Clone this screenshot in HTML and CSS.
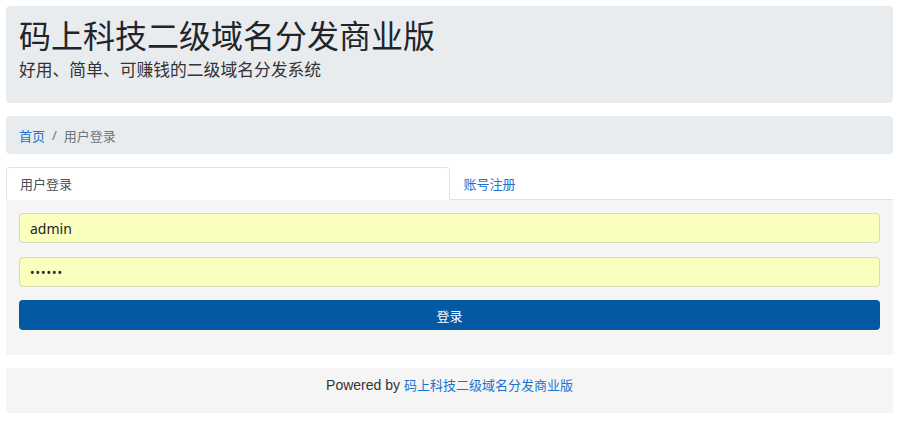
FILE: index.html
```html
<!DOCTYPE html>
<html lang="zh-CN">
<head>
  <meta charset="UTF-8">
  <meta name="viewport" content="width=device-width, initial-scale=1.0">
  <title>用户登录 - 码上科技二级域名分发商业版</title>
  <link rel="stylesheet" href="styles.css">
</head>
<body>
  <div class="container">
    <div class="jumbotron">
      <h1>码上科技二级域名分发商业版</h1>
      <p class="lead">好用、简单、可赚钱的二级域名分发系统</p>
    </div>

    <ol class="breadcrumb">
      <li><a href="#">首页</a></li>
      <li class="sep">/</li>
      <li class="active">用户登录</li>
    </ol>

    <ul class="nav-tabs">
      <li class="tab active">用户登录</li>
      <li class="tab"><a href="#">账号注册</a></li>
    </ul>

    <div class="tab-content">
      <form class="login-form">
        <input class="form-control" type="text" value="admin">
        <input class="form-control" type="password" value="123456">
        <button type="button" class="btn-login">登录</button>
      </form>
    </div>

    <div class="footer">
      Powered by <a href="#">码上科技二级域名分发商业版</a>
    </div>
  </div>
</body>
</html>
```

FILE: styles.css
```css
body {
  font-family: "Noto Sans", "Noto Sans CJK SC", sans-serif;
  background-color: #fff;
  color: #212529;
  margin: 0;
  padding: 0;
}

a {
  color: #1a73d0;
  text-decoration: none;
}

.container {
  margin: 6px 7px 6px 6px;
}

.jumbotron {
  background-color: #e9ecef;
  border-radius: 4px;
  height: 97px;
  padding: 12px 13px 0;
  box-sizing: border-box;
}

.jumbotron h1 {
  font-size: 32px;
  font-weight: 400;
  line-height: 36px;
  margin: 0;
  color: #212529;
}

.lead {
  font-size: 16.8px;
  line-height: 24px;
  margin: 4px 0 0;
  color: #333;
}

.breadcrumb {
  list-style: none;
  display: flex;
  align-items: center;
  gap: 7px;
  margin: 13px 0 0;
  padding: 0 13px;
  height: 38px;
  background-color: #e9ecef;
  border-radius: 4px;
  font-size: 13px;
  color: #6c757d;
}

.nav-tabs {
  list-style: none;
  display: flex;
  margin: 13px 0 0;
  padding: 0;
  border-bottom: 1px solid #dee2e6;
  font-size: 13px;
}

.tab {
  flex: 0 0 50%;
  height: 32px;
  display: flex;
  align-items: center;
  padding: 0 13px;
  box-sizing: border-box;
  border: 1px solid transparent;
  border-radius: 4px 4px 0 0;
  margin-bottom: -1px;
  color: #495057;
}

.tab.active {
  background-color: #fff;
  border-color: #dee2e6 #dee2e6 #fff;
  height: 33px;
}

.tab-content {
  background-color: #f5f5f5;
  padding: 13px 13px 25px;
}

.login-form {
  display: flex;
  flex-direction: column;
  gap: 14px;
}

.form-control {
  height: 30px;
  box-sizing: border-box;
  padding: 0 10px;
  font-family: "Noto Sans", sans-serif;
  font-size: 14px;
  color: #212529;
  background-color: #faffbd;
  border: 1px solid #d6d8b8;
  border-radius: 4px;
  outline: none;
}

.form-control[type="password"] {
  font-size: 12px;
  letter-spacing: 1px;
}

.btn-login {
  height: 30px;
  margin-top: -1px;
  border: none;
  border-radius: 4px;
  background-color: #0459a3;
  color: #fff;
  font-family: "Noto Sans CJK SC", sans-serif;
  font-size: 13px;
}

.footer {
  margin-top: 13px;
  height: 45px;
  box-sizing: border-box;
  padding-top: 7px;
  background-color: #f5f5f5;
  text-align: center;
  font-family: "Liberation Sans", "Noto Sans CJK SC", sans-serif;
  font-size: 14px;
  color: #333;
}

.footer a {
  font-size: 13px;
}
```
